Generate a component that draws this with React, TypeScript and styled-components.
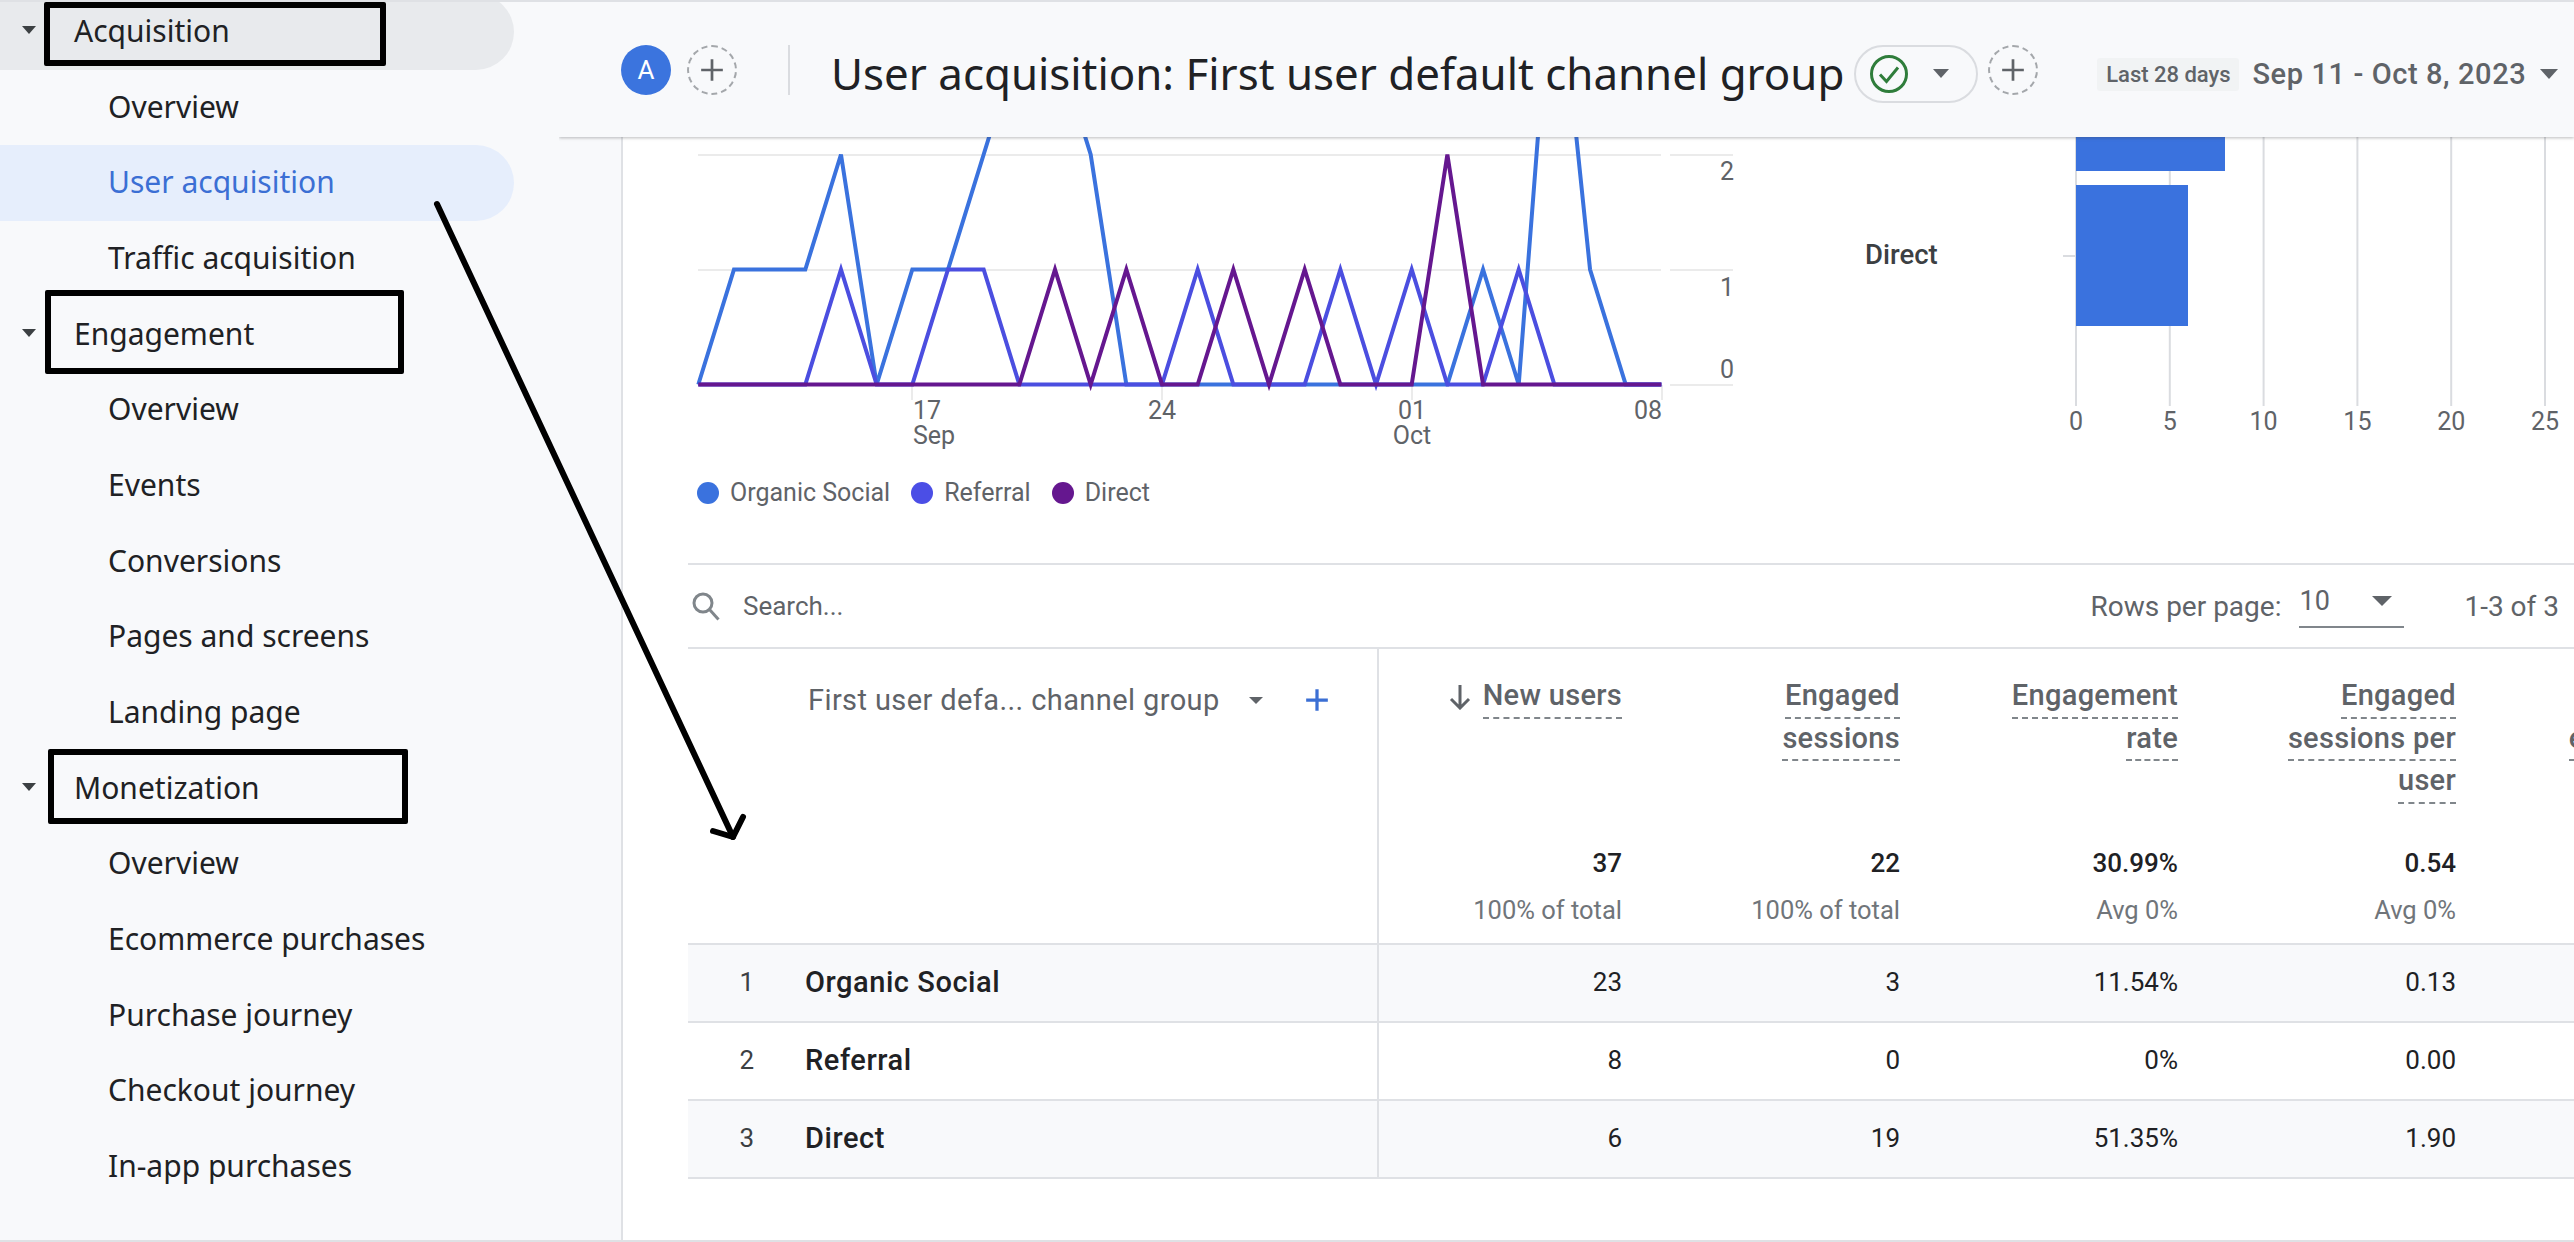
import { FunctionComponent } from "react";
import styled, { createGlobalStyle } from "styled-components";

const GlobalStyle = createGlobalStyle`
  html, body {
    margin: 0;
    padding: 0;
    background: #ffffff;
    overflow: hidden;
  }
  * {
    box-sizing: border-box;
  }
`;

const DARK = "#202124";
const GREY = "#5f6368";
const LINE = "#dfe1e5";

const Page = styled.div`
  position: relative;
  width: 2574px;
  height: 1242px;
  display: flex;
  overflow: hidden;
  border-top: 2px solid ${LINE};
  border-bottom: 2px solid ${LINE};
  font-family: Roboto, "Liberation Sans", sans-serif;
  color: ${DARK};
`;

const Sidebar = styled.nav`
  width: 623px;
  flex-shrink: 0;
  background: #f8f9fb;
  border-right: 2px solid ${LINE};
  font-family: "Noto Sans", "Liberation Sans", sans-serif;
`;

const NavList = styled.div`
  margin-top: -8px;
  display: flex;
  flex-direction: column;
`;

const NavRow = styled.div<{ $heading?: boolean; $active?: boolean; $open?: boolean }>`
  position: relative;
  width: 514px;
  height: 75.7px;
  display: flex;
  align-items: center;
  gap: 38px;
  padding-left: ${(p) => (p.$heading ? "22px" : "108px")};
  padding-bottom: 3px;
  font-size: 30px;
  border-radius: 0 38px 38px 0;
  color: ${(p) => (p.$active ? "#3b6fd4" : DARK)};
  background: ${(p) => (p.$active ? "#e6eefc" : p.$open ? "#e8eaed" : "transparent")};
`;

const Caret = styled.span<{ $w: number; $h: number; $color?: string }>`
  display: inline-block;
  flex-shrink: 0;
  width: 0;
  height: 0;
  border-left: ${(p) => p.$w / 2}px solid transparent;
  border-right: ${(p) => p.$w / 2}px solid transparent;
  border-top: ${(p) => p.$h}px solid ${(p) => p.$color || GREY};
`;

const MarkBox = styled.div<{ $left: number; $width: number; $top: number; $height: number }>`
  position: absolute;
  left: ${(p) => p.$left}px;
  width: ${(p) => p.$width}px;
  top: ${(p) => p.$top}px;
  height: ${(p) => p.$height}px;
  border: 6px solid #000000;
  border-radius: 2px;
`;

const Main = styled.main`
  flex: 1;
  min-width: 0;
  display: flex;
  flex-direction: column;
  background: #ffffff;
`;

const Header = styled.header`
  position: relative;
  z-index: 2;
  height: 135px;
  margin-left: -64px;
  padding-left: 62px;
  flex-shrink: 0;
  display: flex;
  align-items: center;
  background: #f8f9fb;
  box-shadow: 0 1px 3px rgba(60, 64, 67, 0.35);
  clip-path: inset(0 0 -8px 0);
`;

const Avatar = styled.div`
  width: 50px;
  height: 50px;
  flex-shrink: 0;
  border-radius: 50%;
  background: #3b74de;
  color: #ffffff;
  font-size: 26px;
  display: flex;
  align-items: center;
  justify-content: center;
`;

const AddCircle = styled.div<{ $ml: number }>`
  width: 50px;
  height: 50px;
  flex-shrink: 0;
  margin-left: ${(p) => p.$ml}px;
  border-radius: 50%;
  border: 2px dashed #a4a7ab;
  display: flex;
  align-items: center;
  justify-content: center;
`;

const Divider = styled.div`
  width: 2px;
  height: 50px;
  flex-shrink: 0;
  margin-left: 51px;
  background: #dadce0;
`;

const Title = styled.h1`
  margin: 7px 0 0 41px;
  font-family: "Noto Sans", "Liberation Sans", sans-serif;
  font-size: 43.85px;
  font-weight: 400;
  white-space: nowrap;
  color: ${DARK};
`;

const StatusChip = styled.div`
  width: 124px;
  height: 58px;
  flex-shrink: 0;
  margin: 8px 0 0 10px;
  padding-left: 13px;
  display: flex;
  align-items: center;
  gap: 24px;
  border: 2px solid #dadce0;
  border-radius: 29px;
`;

const RangeTag = styled.div`
  width: 142px;
  height: 33px;
  flex-shrink: 0;
  margin: 9px 0 0 59px;
  display: flex;
  align-items: center;
  justify-content: center;
  background: #f1f3f4;
  border-radius: 3px;
  font-size: 22px;
  font-weight: 500;
  color: ${GREY};
  white-space: nowrap;
`;

const DateRange = styled.div`
  margin: 9px 0 0 13px;
  display: flex;
  align-items: center;
  gap: 14px;
  font-size: 29px;
  font-weight: 500;
  letter-spacing: 0.6px;
  color: ${GREY};
  white-space: nowrap;
`;

const ChartsRow = styled.section`
  height: 428px;
  margin-left: 65px;
  flex-shrink: 0;
  display: flex;
  border-bottom: 2px solid ${LINE};
`;

const LineChartBlock = styled.div`
  width: 1162px;
  flex-shrink: 0;
  display: flex;
  flex-direction: column;
`;

const ChartSvg = styled.svg`
  display: block;
  flex-shrink: 0;
  font-family: Roboto, "Liberation Sans", sans-serif;
  font-size: 25px;
`;

const Legend = styled.div`
  margin-top: 21px;
  padding-left: 9px;
  display: flex;
  gap: 21px;
  font-size: 25px;
  color: ${GREY};
`;

const LegendItem = styled.div`
  display: flex;
  align-items: center;
  gap: 11px;
  white-space: nowrap;
`;

const LegendDot = styled.span<{ $color: string }>`
  width: 22px;
  height: 22px;
  border-radius: 50%;
  background: ${(p) => p.$color};
`;

const SearchBar = styled.div`
  height: 84px;
  margin-left: 65px;
  flex-shrink: 0;
  display: flex;
  align-items: center;
  padding: 0 15px 0 4px;
  border-bottom: 2px solid ${LINE};
  font-size: 28px;
  color: ${GREY};
`;

const SearchText = styled.span`
  margin-left: 23px;
  flex: 1;
  font-size: 26px;
`;

const RowsSelect = styled.div`
  width: 105px;
  height: 50px;
  margin: -6px 60px 0 18px;
  padding: 0 12px 2px 0;
  display: flex;
  justify-content: space-between;
  align-items: center;
  border-bottom: 2px solid #80868b;
  font-size: 27px;
`;

const Table = styled.div`
  margin-left: 65px;
  display: flex;
  flex-direction: column;
`;

const TableRow = styled.div<{ $shaded?: boolean }>`
  display: grid;
  grid-template-columns: 689px 267px repeat(4, 278px);
  flex-shrink: 0;
  width: 2068px;
  font-size: 26px;
  background: ${(p) => (p.$shaded ? "#f8f9fb" : "#ffffff")};
  border-bottom: 2px solid ${LINE};
`;

const HeadDimension = styled.div`
  height: 294px;
  padding: 27px 0 0 120px;
  font-size: 29px;
  letter-spacing: 0.4px;
  color: ${GREY};
  white-space: nowrap;
`;

const DimensionRow = styled.div`
  height: 48px;
  display: flex;
  align-items: center;
`;

const DimensionCaret = styled.span`
  display: flex;
  margin-left: 29px;
`;

const DimensionAdd = styled.span`
  display: flex;
  margin-left: 41px;
`;

const MetricHead = styled.div<{ $first?: boolean }>`
  height: 294px;
  padding: 27px 22px 0 0;
  display: flex;
  flex-direction: column;
  align-items: flex-end;
  border-left: ${(p) => (p.$first ? `2px solid ${LINE}` : "none")};
  font-size: 29px;
  letter-spacing: 0.3px;
  font-weight: 500;
  color: ${GREY};
`;

const MetricLines = styled.div`
  height: 170px;
  display: flex;
  flex-direction: column;
  align-items: flex-end;
`;

const MetricLine = styled.span`
  height: 42.5px;
  display: inline-flex;
  align-items: center;
  gap: 12px;
  white-space: nowrap;
`;

const MetricWord = styled.span`
  height: 42.5px;
  line-height: 38px;
  border-bottom: 2px dashed #80868b;
`;

const TotalValue = styled.div`
  font-size: 26px;
  letter-spacing: 0;
  font-weight: 500;
  color: ${DARK};
  line-height: 34px;
`;

const TotalNote = styled.div`
  margin-top: 13px;
  font-size: 25.5px;
  letter-spacing: 0;
  font-weight: 400;
  color: #70757a;
  line-height: 34px;
`;

const NameCell = styled.div`
  height: 76px;
  display: flex;
  align-items: center;
  padding-bottom: 3px;
`;

const RowIndex = styled.span`
  width: 117px;
  padding-right: 51px;
  text-align: right;
  color: #3c4043;
`;

const RowName = styled.span`
  font-size: 29px;
  letter-spacing: 0.55px;
  font-weight: 500;
  color: ${DARK};
`;

const ValueCell = styled.div<{ $first?: boolean }>`
  height: 76px;
  padding: 0 22px 3px 0;
  display: flex;
  align-items: center;
  justify-content: flex-end;
  border-left: ${(p) => (p.$first ? `2px solid ${LINE}` : "none")};
  color: ${DARK};
`;

const ArrowOverlay = styled.svg`
  position: absolute;
  left: 425px;
  top: 190px;
  z-index: 3;
  overflow: visible;
`;

interface IconProps {
  size: number;
  color?: string;
  weight?: number;
}

const PlusIcon: FunctionComponent<IconProps> = ({ size, color = GREY, weight = 2.5 }) => (
  <svg width={size} height={size} viewBox="0 0 24 24" fill="none" stroke={color} strokeWidth={weight}>
    <path d="M12 2v20M2 12h20" />
  </svg>
);

const CheckIcon = () => (
  <svg width="40" height="40" viewBox="0 0 40 40" fill="none" stroke="#2f7d3b" strokeWidth="3">
    <circle cx="20" cy="20" r="17.5" />
    <path d="M11 20.5l6.5 7L29 13.5" />
  </svg>
);

const SearchIcon = () => (
  <svg width="28" height="29" viewBox="0 0 28 29" fill="none" stroke="#80868b" strokeWidth="3">
    <circle cx="11" cy="11" r="9" />
    <path d="M17.5 17.5l9 10" />
  </svg>
);

const DownArrow = () => (
  <svg width="22" height="26" viewBox="0 0 22 26" fill="none" stroke={GREY} strokeWidth="3">
    <path d="M11 1v23M2 15l9 9 9-9" />
  </svg>
);

const navItems = [
  { label: "Acquisition", heading: true, open: true, mark: [44, 342, 8, 64] },
  { label: "Overview" },
  { label: "User acquisition", active: true },
  { label: "Traffic acquisition" },
  { label: "Engagement", heading: true, mark: [45, 359, -7, 84] },
  { label: "Overview" },
  { label: "Events" },
  { label: "Conversions" },
  { label: "Pages and screens" },
  { label: "Landing page" },
  { label: "Monetization", heading: true, mark: [48, 360, -2, 75] },
  { label: "Overview" },
  { label: "Ecommerce purchases" },
  { label: "Purchase journey" },
  { label: "Checkout journey" },
  { label: "In-app purchases" },
];

// daily new users per channel, Sep 11 - Oct 8
const series = [
  { color: "#3a72de", values: [0, 1, 1, 1, 2, 0, 1, 1, 2, 3, 3, 2, 0, 0, 0, 0, 0, 0, 0, 0, 0, 0, 1, 0, 4, 1, 0, 0] },
  { color: "#4b4ee0", values: [0, 0, 0, 0, 1, 0, 0, 1, 1, 0, 0, 0, 0, 0, 1, 0, 0, 0, 1, 0, 1, 0, 0, 1, 0, 0, 0, 0] },
  { color: "#65178f", values: [0, 0, 0, 0, 0, 0, 0, 0, 0, 0, 1, 0, 1, 0, 0, 1, 0, 1, 0, 0, 0, 2, 0, 0, 0, 0, 0, 0] },
];

const chartX = (i: number) => 698.3 + i * 35.67;
const chartY = (v: number) => 384.5 - v * 115;

const metrics = [
  { lines: ["New users"], total: "37", note: "100% of total", arrow: true },
  { lines: ["Engaged", "sessions"], total: "22", note: "100% of total" },
  { lines: ["Engagement", "rate"], total: "30.99%", note: "Avg 0%" },
  { lines: ["Engaged", "sessions per", "user"], total: "0.54", note: "Avg 0%" },
  { lines: ["\u00a0", "engagement"], total: "", note: "" },
];

const rows = [
  { name: "Organic Social", values: ["23", "3", "11.54%", "0.13", ""] },
  { name: "Referral", values: ["8", "0", "0%", "0.00", ""] },
  { name: "Direct", values: ["6", "19", "51.35%", "1.90", ""] },
];

const LineChart = () => (
  <ChartSvg width={1162} height={320} viewBox="688 137 1162 320">
    {[154, 269, 384].map((y) => (
      <g key={y} stroke="#ebebeb" strokeWidth="2">
        <line x1={698} x2={1661} y1={y + 1} y2={y + 1} />
        <line x1={1670} x2={1733} y1={y + 1} y2={y + 1} />
      </g>
    ))}
    {[912, 1162, 1412, 1662].map((x) => (
      <line key={x} x1={x} x2={x} y1={385} y2={400} stroke="#ebebeb" strokeWidth="2" />
    ))}
    {series.map((s) => (
      <polyline
        key={s.color}
        points={s.values.map((v, i) => `${chartX(i)},${chartY(v)}`).join(" ")}
        fill="none"
        stroke={s.color}
        strokeWidth="4"
        strokeLinejoin="miter"
      />
    ))}
    <g fill={GREY}>
      <text x="1727" y="180" textAnchor="middle">2</text>
      <text x="1727" y="296" textAnchor="middle">1</text>
      <text x="1727" y="378" textAnchor="middle">0</text>
      <text x="913" y="419">17</text>
      <text x="913" y="444">Sep</text>
      <text x="1162" y="419" textAnchor="middle">24</text>
      <text x="1412" y="419" textAnchor="middle">01</text>
      <text x="1412" y="444" textAnchor="middle">Oct</text>
      <text x="1648" y="419" textAnchor="middle">08</text>
    </g>
  </ChartSvg>
);

const BarChart = () => (
  <ChartSvg width={724} height={300} viewBox="1850 137 724 300">
    {[0, 5, 10, 15, 20, 25].map((t) => {
      const x = 2076 + t * 18.76;
      return (
        <g key={t}>
          <line x1={x} x2={x} y1={137} y2={406} stroke="#dadce0" strokeWidth="2" />
          <text x={x} y="430" textAnchor="middle" fill={GREY}>{t}</text>
        </g>
      );
    })}
    <rect x="2076" y="130" width="149" height="41" fill="#3a72de" />
    <rect x="2076" y="185" width="112" height="141" fill="#3a72de" />
    <line x1="2063" x2="2076" y1="256" y2="256" stroke="#dadce0" strokeWidth="2" />
    <text x="1865" y="264" fontSize="27.5" fontWeight="500" fill="#3c4043">Direct</text>
  </ChartSvg>
);

const App: FunctionComponent = () => {
  return (
    <Page>
      <GlobalStyle />
      <Sidebar>
        <NavList>
          {navItems.map((item, i) => (
            <NavRow key={i} $heading={item.heading} $active={item.active} $open={item.open}>
              {item.heading && <Caret $w={14} $h={8} $color="#3c4043" />}
              {item.label}
              {item.mark && (
                <MarkBox $left={item.mark[0]} $width={item.mark[1]} $top={item.mark[2]} $height={item.mark[3]} />
              )}
            </NavRow>
          ))}
        </NavList>
      </Sidebar>
      <Main>
        <Header>
          <Avatar>A</Avatar>
          <AddCircle $ml={16}>
            <PlusIcon size={26} />
          </AddCircle>
          <Divider />
          <Title>User acquisition: First user default channel group</Title>
          <StatusChip>
            <CheckIcon />
            <Caret $w={16} $h={9} />
          </StatusChip>
          <AddCircle $ml={10}>
            <PlusIcon size={26} />
          </AddCircle>
          <RangeTag>Last 28 days</RangeTag>
          <DateRange>
            Sep 11 - Oct 8, 2023
            <Caret $w={18} $h={10} />
          </DateRange>
        </Header>
        <ChartsRow>
          <LineChartBlock>
            <LineChart />
            <Legend>
              <LegendItem><LegendDot $color="#3a72de" />Organic Social</LegendItem>
              <LegendItem><LegendDot $color="#4b4ee6" />Referral</LegendItem>
              <LegendItem><LegendDot $color="#65178f" />Direct</LegendItem>
            </Legend>
          </LineChartBlock>
          <BarChart />
        </ChartsRow>
        <SearchBar>
          <SearchIcon />
          <SearchText>Search...</SearchText>
          Rows per page:
          <RowsSelect>
            10
            <Caret $w={20} $h={10} />
          </RowsSelect>
          1-3 of 3
        </SearchBar>
        <Table>
          <TableRow>
            <HeadDimension>
              <DimensionRow>
                First user defa... channel group
                <DimensionCaret>
                  <Caret $w={15} $h={7} />
                </DimensionCaret>
                <DimensionAdd>
                  <PlusIcon size={26} color="#3b6fd4" weight={3} />
                </DimensionAdd>
              </DimensionRow>
            </HeadDimension>
            {metrics.map((m, i) => (
              <MetricHead key={i} $first={i === 0}>
                <MetricLines>
                  {m.lines.map((line) => (
                    <MetricLine key={line}>
                      {m.arrow && <DownArrow />}
                      <MetricWord>{line}</MetricWord>
                    </MetricLine>
                  ))}
                </MetricLines>
                <TotalValue>{m.total}</TotalValue>
                <TotalNote>{m.note}</TotalNote>
              </MetricHead>
            ))}
          </TableRow>
          {rows.map((row, i) => (
            <TableRow key={row.name} $shaded={i !== 1}>
              <NameCell>
                <RowIndex>{i + 1}</RowIndex>
                <RowName>{row.name}</RowName>
              </NameCell>
              {row.values.map((v, j) => (
                <ValueCell key={j} $first={j === 0}>{v}</ValueCell>
              ))}
            </TableRow>
          ))}
        </Table>
      </Main>
      <ArrowOverlay width={330} height={660} viewBox="425 190 330 660" fill="none" stroke="#000000" strokeWidth="6" strokeLinecap="round" strokeLinejoin="round">
        <path d="M437 202L733 835" />
        <path d="M743 815L733 835L713 829" />
      </ArrowOverlay>
    </Page>
  );
};

export default App;
